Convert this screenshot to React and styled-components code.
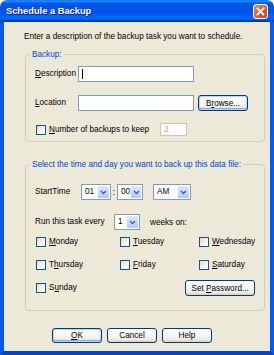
import React from 'react';
import styled, { createGlobalStyle } from 'styled-components';

const Global = createGlobalStyle`
  html, body { margin: 0; padding: 0; background: #ffffff; }
  body { font-family: "Liberation Sans", Arial, sans-serif; }
`;

const FONT = `8.2px "Liberation Sans", Arial, sans-serif`;

const Window = styled.div`
  width: 274px;
  height: 355px;
  display: flex;
  flex-direction: column;
  border-radius: 7px 7px 0 0;
  overflow: hidden;
  font: ${FONT};
  color: #000;
`;

const TitleBar = styled.div`
  height: 22px;
  flex: none;
  display: flex;
  align-items: center;
  padding: 0 6px 0 6px;
  background: linear-gradient(180deg, #0058ee 0%, #3593ff 4%, #288eff 6%, #127dff 8%, #036ffc 10%, #0262ee 14%, #0057e5 20%, #0054e3 24%, #0055eb 56%, #005bf5 66%, #026afe 76%, #0062ef 86%, #0052d6 92%, #0040ab 94%, #003092 100%);
`;

const Title = styled.span`
  flex: 1;
  color: #ffffff;
  font: bold 9.3px "Liberation Sans", Arial, sans-serif;
  text-shadow: 1px 1px 0 #0f1089;
  letter-spacing: 0;
`;

const CloseButton = styled.span`
  box-sizing: border-box;
  width: 15px;
  height: 15px;
  border: 1px solid #ffffff;
  border-radius: 3px;
  background: radial-gradient(circle at 85% 85%, #cc4627 0%, #dc5b39 45%, #e4876b 100%);
  display: flex;
  align-items: center;
  justify-content: center;
`;

const Frame = styled.div`
  flex: 1;
  display: flex;
  flex-direction: column;
  background: #ece9d8;
  border-left: 4px solid #0a5ae9;
  border-right: 4px solid #0a5ae9;
  border-bottom: 4px solid #0840c8;
  padding: 10px 5px 0 20px;
`;

const Intro = styled.div`
  line-height: 10px;
  height: 10px;
  white-space: nowrap;
`;

const Group = styled.fieldset`
  margin: ${p => p.$mt}px 0 0 1px;
  padding: 0 ${p => p.$pr}px ${p => p.$pb}px 9px;
  border: 1px solid #d0d0bf;
  border-radius: 4px;
  min-width: 0;
  display: flex;
  flex-direction: column;
`;

const Legend = styled.legend`
  color: #0046d5;
  padding: 0 2px;
  margin-left: -5px;
  line-height: 10px;
  font: ${FONT};
`;

const Row = styled.div`
  display: flex;
  align-items: center;
  height: ${p => p.$h}px;
  margin-top: ${p => p.$mt}px;
  white-space: nowrap;
`;

const Label = styled.span`
  width: ${p => p.$w}px;
  flex: none;
  line-height: 10px;
`;

const TextField = styled.div`
  box-sizing: border-box;
  width: ${p => p.$w}px;
  height: ${p => p.$h}px;
  border: 1px solid ${p => (p.$disabled ? '#c9c7ba' : '#7f9db9')};
  background: #ffffff;
  color: #aca899;
  display: flex;
  align-items: center;
  padding-left: 3px;
  flex: none;
`;

const Caret = styled.span`
  width: 1px;
  height: 10px;
  background: #000;
`;

const Button = styled.button`
  box-sizing: border-box;
  width: ${p => p.$w}px;
  height: ${p => p.$h}px;
  margin-left: ${p => p.$ml || 0}px;
  border: 1px solid #003c74;
  border-radius: 3px;
  background: linear-gradient(180deg, #ffffff 0%, #f7f7f4 50%, #ecebe6 80%, #d6d0c5 100%);
  box-shadow: ${p => (p.$focus ? 'inset 0 0 0 1px #bcd4f6, inset 0 -1px 0 1px #89ade4' : 'none')};
  font: ${FONT};
  color: #000;
  padding: 0;
  flex: none;
  justify-self: end;
  grid-column: ${p => p.$col || 'auto'};
`;

const U = styled.span`
  text-decoration: underline;
`;

const Box = styled.span`
  box-sizing: border-box;
  width: 10px;
  height: 10px;
  margin-left: 1px;
  border: 1px solid #1c5180;
  background: linear-gradient(135deg, #dcdcd7 0%, #f4f4f0 60%, #ffffff 100%);
  flex: none;
`;

const CheckText = styled.span`
  margin-left: 3px;
  width: ${p => (p.$w ? `${p.$w}px` : 'auto')};
  line-height: 10px;
  flex: none;
`;

const Check = styled.label`
  display: flex;
  align-items: center;
  height: 16px;
`;

const ComboBox = styled.div`
  box-sizing: border-box;
  width: ${p => p.$w}px;
  height: 16px;
  border: 1px solid #7f9db9;
  background: #ffffff;
  display: flex;
  flex: none;
`;

const ComboValue = styled.span`
  flex: 1;
  padding-left: 3px;
  line-height: 14px;
`;

const DropButton = styled.span`
  width: 11px;
  margin: 1px;
  border-radius: 1px;
  background: linear-gradient(180deg, #dde7fe 0%, #c5d6fc 60%, #b3c8f7 100%);
  display: flex;
  align-items: center;
  justify-content: center;
`;

const Colon = styled.span`
  width: 6px;
  text-align: center;
  flex: none;
`;

const Gap = styled.span`
  width: ${p => p.$w}px;
  flex: none;
`;

const DaysGrid = styled.div`
  display: grid;
  grid-template-columns: 84px 79px auto;
  grid-auto-rows: 16px;
  row-gap: 7px;
  margin-top: 4px;
`;

const ButtonRow = styled.div`
  display: flex;
  gap: 5px;
  margin-top: 17px;
  padding-left: 28px;
`;

const Chevron = () => (
  <svg width="7" height="5" viewBox="0 0 7 5">
    <path d="M1 1 L3.5 3.5 L6 1" fill="none" stroke="#4d6185" strokeWidth="1.4" />
  </svg>
);

const Combo = ({ w, value }) => (
  <ComboBox $w={w}>
    <ComboValue>{value}</ComboValue>
    <DropButton>
      <Chevron />
    </DropButton>
  </ComboBox>
);

const CheckItem = ({ children, w }) => (
  <Check>
    <Box />
    <CheckText $w={w}>{children}</CheckText>
  </Check>
);

export default function App() {
  return (
    <>
      <Global />
      <Window>
        <TitleBar>
          <Title>Schedule a Backup</Title>
          <CloseButton>
            <svg width="9" height="9" viewBox="0 0 9 9">
              <path d="M1.5 1.5 L7.5 7.5 M7.5 1.5 L1.5 7.5" stroke="#ffffff" strokeWidth="1.8" strokeLinecap="square" />
            </svg>
          </CloseButton>
        </TitleBar>
        <Frame>
          <Intro>Enter a description of the backup task you want to schedule.</Intro>

          <Group $mt={8} $pr={17} $pb={5}>
            <Legend>Backup:</Legend>
            <Row $h={16} $mt={7}>
              <Label $w={43}><U>D</U>escription</Label>
              <TextField $w={116} $h={16}><Caret /></TextField>
            </Row>
            <Row $h={16} $mt={13}>
              <Label $w={43}><U>L</U>ocation</Label>
              <TextField $w={116} $h={16} />
              <Button $w={50} $h={16} $ml={4} $focus>B<U>r</U>owse...</Button>
            </Row>
            <Row $h={13} $mt={12}>
              <Box />
              <CheckText $w={111}><U>N</U>umber of backups to keep</CheckText>
              <TextField $w={27} $h={13} $disabled>3</TextField>
            </Row>
          </Group>

          <Group $mt={18} $pr={14} $pb={14}>
            <Legend>Select the time and day you want to back up this data file:</Legend>
            <Row $h={16} $mt={15}>
              <Label $w={46}>StartTime</Label>
              <Combo w={30} value="01" />
              <Colon>:</Colon>
              <Combo w={26} value="00" />
              <Gap $w={10} />
              <Combo w={38} value="AM" />
            </Row>
            <Row $h={16} $mt={14}>
              <Label $w={79}>Run this task every</Label>
              <Combo w={26} value="1" />
              <Gap $w={10} />
              <span>weeks on:</span>
            </Row>
            <DaysGrid>
              <CheckItem><U>M</U>onday</CheckItem>
              <CheckItem><U>T</U>uesday</CheckItem>
              <CheckItem><U>W</U>ednesday</CheckItem>
              <CheckItem>T<U>h</U>ursday</CheckItem>
              <CheckItem><U>F</U>riday</CheckItem>
              <CheckItem><U>S</U>aturday</CheckItem>
              <CheckItem>S<U>u</U>nday</CheckItem>
              <Button $w={70} $h={16} $col="2 / 4">Set <U>P</U>assword...</Button>
            </DaysGrid>
          </Group>

          <ButtonRow>
            <Button $w={50} $h={15} $focus><U>O</U>K</Button>
            <Button $w={50} $h={15}>Cancel</Button>
            <Button $w={50} $h={15}>Help</Button>
          </ButtonRow>
        </Frame>
      </Window>
    </>
  );
}
